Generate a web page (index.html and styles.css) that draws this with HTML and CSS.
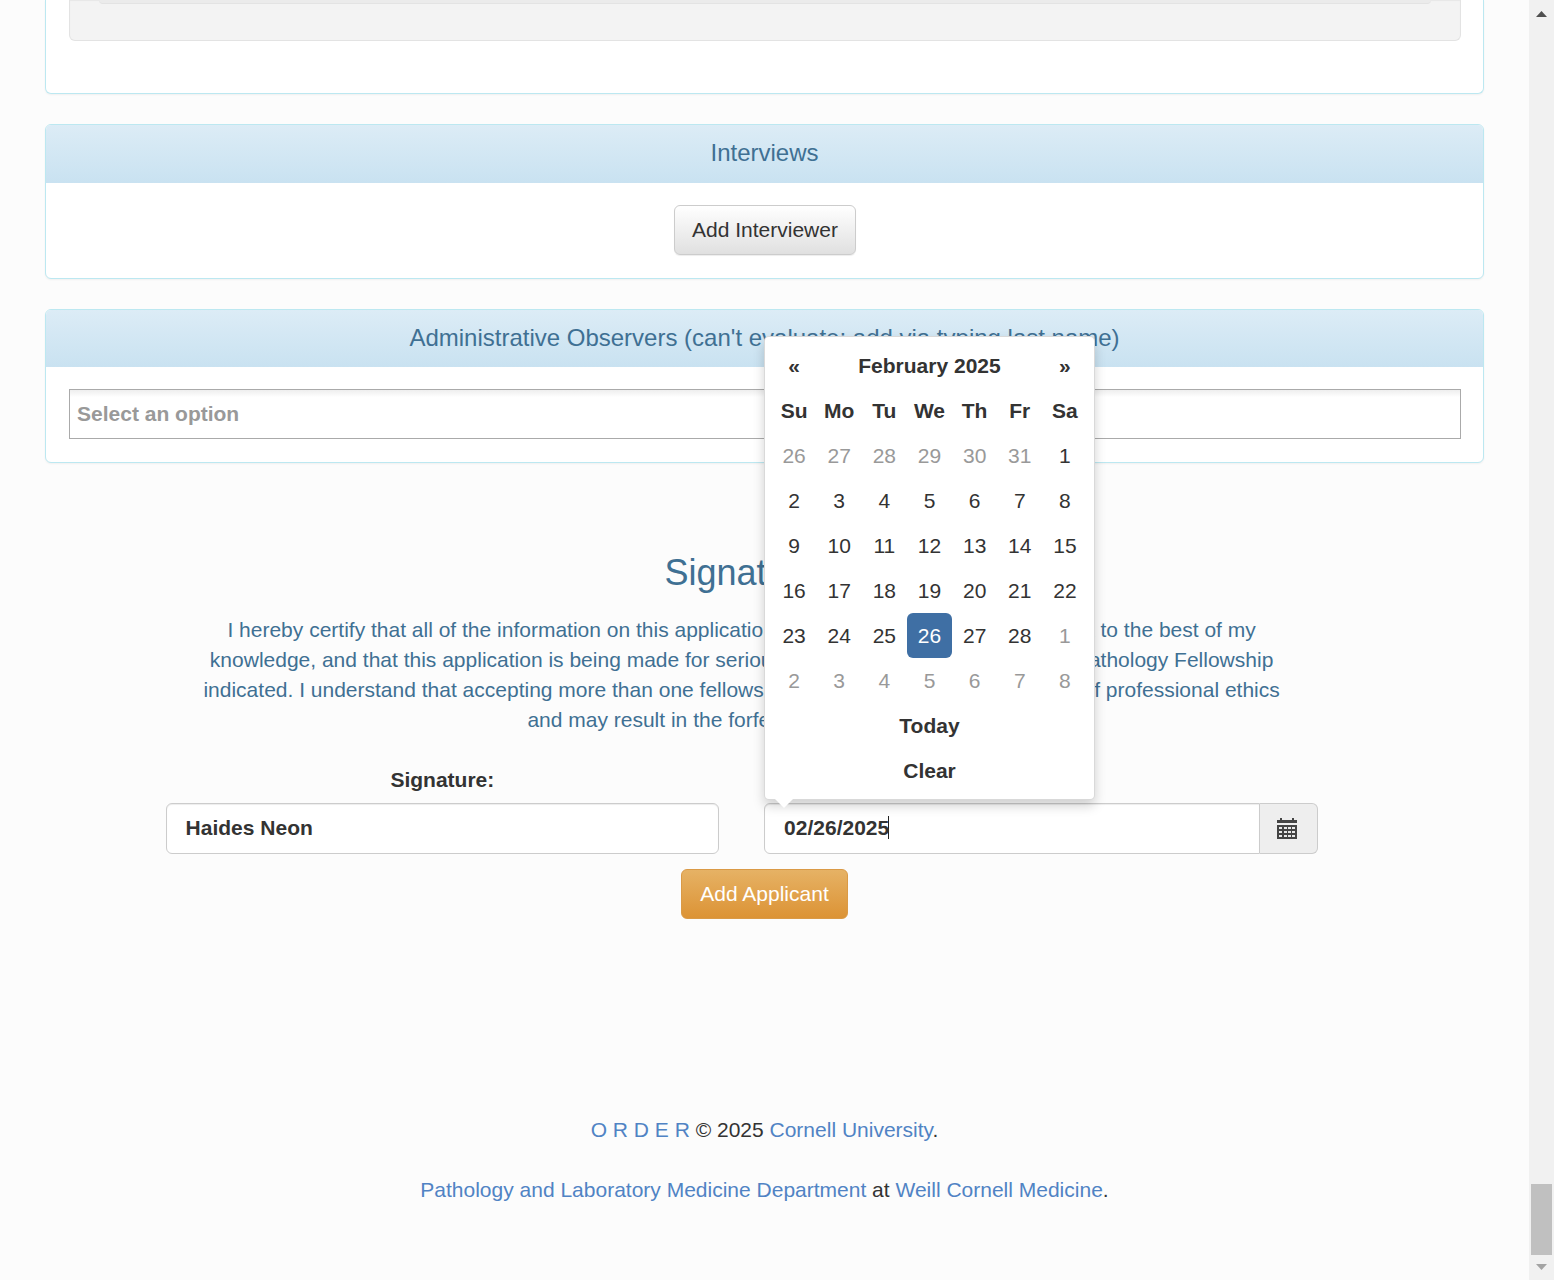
FILE: index.html
```html
<!DOCTYPE html>
<html lang="en">
<head>
    <meta charset="UTF-8">
    <title>Add Applicant</title>
    <link rel="stylesheet" href="styles.css">
</head>
<body>
    <div class="page">
        <div class="panel panel-top">
            <div class="well">
                <div class="well-inner"></div>
            </div>
        </div>

        <div class="panel">
            <div class="panel-heading">Interviews</div>
            <div class="panel-body center">
                <a class="btn btn-default">Add Interviewer</a>
            </div>
        </div>

        <div class="panel">
            <div class="panel-heading">Administrative Observers (can't evaluate; add via typing last name)</div>
            <div class="panel-body">
                <div class="select-box">Select an option</div>
            </div>
        </div>

        <div class="signature">
            <h2 class="signature-title">Signature</h2>
            <p class="certify">
                I hereby certify that all of the information on this application is fully complete, true, and correct to the best of my<br>
                knowledge, and that this application is being made for serious consideration of the Molecular Pathology Fellowship<br>
                indicated. I understand that accepting more than one fellowship position is a break of the code of professional ethics<br>
                and may result in the forfeiture of all positions.
            </p>
            <div class="sign-row">
                <div class="sign-col">
                    <label class="sign-label">Signature:</label>
                    <div class="form-control">Haides Neon</div>
                </div>
                <div class="sign-col">
                    <label class="sign-label">Date:</label>
                    <div class="input-group">
                        <div class="form-control group-input"><span class="caret-text">02/26/2025</span></div>
                        <span class="addon">
                            <svg width="20" height="21" viewBox="0 0 20 21">
                                <rect x="3" y="0" width="2" height="3" fill="#444"/>
                                <rect x="15" y="0" width="2" height="3" fill="#444"/>
                                <rect x="0" y="2" width="20" height="3" fill="#444"/>
                                <rect x="0" y="7" width="20" height="14" fill="#444"/>
                                <g fill="#e8e8e8">
                                    <rect x="2" y="9" width="3" height="2"/><rect x="7" y="9" width="3" height="2"/><rect x="11" y="9" width="3" height="2"/><rect x="15" y="9" width="3" height="2"/>
                                    <rect x="2" y="13" width="3" height="2"/><rect x="7" y="13" width="3" height="2"/><rect x="11" y="13" width="3" height="2"/><rect x="15" y="13" width="3" height="2"/>
                                    <rect x="2" y="17" width="3" height="2"/><rect x="7" y="17" width="3" height="2"/><rect x="11" y="17" width="3" height="2"/><rect x="15" y="17" width="3" height="2"/>
                                </g>
                            </svg>
                        </span>
                    </div>
                </div>
            </div>
        </div>
        <div class="center">
            <a class="btn btn-warning">Add Applicant</a>
        </div>

        <footer class="footer">
            <p><a>O R D E R</a> © 2025 <a>Cornell University</a>.</p>
            <p><a>Pathology and Laboratory Medicine Department</a> at <a>Weill Cornell Medicine</a>.</p>
        </footer>

        <div class="datepicker">
            <table>
                <tr class="head"><td>«</td><td colspan="5">February 2025</td><td>»</td></tr>
                <tr class="head"><td>Su</td><td>Mo</td><td>Tu</td><td>We</td><td>Th</td><td>Fr</td><td>Sa</td></tr>
                <tr><td class="old">26</td><td class="old">27</td><td class="old">28</td><td class="old">29</td><td class="old">30</td><td class="old">31</td><td>1</td></tr>
                <tr><td>2</td><td>3</td><td>4</td><td>5</td><td>6</td><td>7</td><td>8</td></tr>
                <tr><td>9</td><td>10</td><td>11</td><td>12</td><td>13</td><td>14</td><td>15</td></tr>
                <tr><td>16</td><td>17</td><td>18</td><td>19</td><td>20</td><td>21</td><td>22</td></tr>
                <tr><td>23</td><td>24</td><td>25</td><td class="active">26</td><td>27</td><td>28</td><td class="old">1</td></tr>
                <tr><td class="old">2</td><td class="old">3</td><td class="old">4</td><td class="old">5</td><td class="old">6</td><td class="old">7</td><td class="old">8</td></tr>
                <tr class="head"><td colspan="7">Today</td></tr>
                <tr class="head"><td colspan="7">Clear</td></tr>
            </table>
        </div>
    </div>

    <div class="scrollbar">
        <svg class="arrow" width="11" height="6" viewBox="0 0 11 6"><path d="M5.5 0L11 6H0z" fill="#505050"/></svg>
        <div class="thumb"></div>
        <svg class="arrow" width="11" height="6" viewBox="0 0 11 6"><path d="M0 0H11L5.5 6z" fill="#a3a3a3"/></svg>
    </div>
</body>
</html>
```

FILE: styles.css
```css
html, body {
    margin: 0;
    height: 1280px;
    overflow: hidden;
}
body {
    display: flex;
    background-color: #fcfcfc;
    font-family: "Liberation Sans", Arial, sans-serif;
    font-size: 21px;
    line-height: 30px;
    color: #333;
}
.page {
    position: relative;
    flex: 1;
    padding: 0 45px;
    min-width: 0;
}
.center {
    text-align: center;
}

/* panels */
.panel {
    background-color: #fff;
    border: 1px solid #bce8f1;
    border-radius: 6px;
    margin-bottom: 30px;
    box-shadow: 0 1px 2px rgba(0, 0, 0, .05);
}
.panel-top {
    height: 94px;
    box-sizing: border-box;
    padding: 0 22px 0 23px;
    border-top: 0;
    border-top-left-radius: 0;
    border-top-right-radius: 0;
}
.well {
    height: 41px;
    box-sizing: border-box;
    padding: 0 29px;
    background-color: #f3f3f3;
    border: 1px solid #e3e3e3;
    border-top: 0;
    border-radius: 0 0 6px 6px;
    box-shadow: inset 0 1px 1px rgba(0, 0, 0, .05);
}
.well-inner {
    height: 3px;
    background-color: #ebebeb;
    border-bottom: 1px solid #e3e3e3;
    border-radius: 0 0 4px 4px;
}
.panel-heading {
    height: 57.6px;
    line-height: 56px;
    text-align: center;
    font-size: 24px;
    color: #3f7093;
    background-image: linear-gradient(to bottom, #dcecf6, #c9e2f1);
    border-radius: 5px 5px 0 0;
}
.panel-body {
    padding: 22px 22px 23px 23px;
}
.select-box {
    height: 50px;
    box-sizing: border-box;
    padding: 0 7px;
    line-height: 48px;
    border: 1px solid #aaa;
    background-image: linear-gradient(to bottom, #eee 0, #fff 15%);
    font-weight: bold;
    color: #999;
}

/* buttons */
.btn {
    display: inline-block;
    box-sizing: border-box;
    height: 50px;
    padding: 0 18px;
    line-height: 48px;
    border: 1px solid #ccc;
    border-radius: 6px;
}
.btn-default {
    padding: 0 17.2px;
    color: #333;
    background-image: linear-gradient(to bottom, #fff, #e0e0e0);
    box-shadow: inset 0 1px 0 rgba(255, 255, 255, .15), 0 1px 1px rgba(0, 0, 0, .075);
}
.btn-warning {
    color: #fff;
    border-color: #da9a46;
    background-image: linear-gradient(to bottom, #e6b265, #dc9335);
}

/* signature */
.signature {
    width: 1152px;
    margin-left: 120.6px;
}
.signature-title {
    margin: 90px 0 0;
    font-size: 36px;
    line-height: 40px;
    font-weight: normal;
    text-align: center;
    color: #3f7093;
}
.certify {
    margin: 22px 0 0;
    text-align: center;
    white-space: nowrap;
    color: #3f7093;
}
.sign-row {
    display: flex;
    gap: 45px;
    margin-top: 30px;
    margin-bottom: 15px;
}
.sign-col {
    flex: 1;
    text-align: center;
}
.sign-label {
    display: block;
    font-weight: bold;
    margin-bottom: 8px;
}
.form-control {
    height: 51px;
    box-sizing: border-box;
    padding: 0 19px;
    line-height: 48px;
    text-align: left;
    font-weight: bold;
    background-color: #fff;
    border: 1px solid #ccc;
    border-radius: 6px;
    box-shadow: inset 0 1px 1px rgba(0, 0, 0, .075);
}
.input-group {
    display: flex;
}
.group-input {
    flex: 1;
    border-radius: 6px 0 0 6px;
}
.caret-text {
    box-shadow: inset -1px 0 0 #222;
}
.addon {
    display: flex;
    align-items: center;
    width: 58px;
    box-sizing: border-box;
    padding-left: 17px;
    background-color: #eee;
    border: 1px solid #ccc;
    border-left: 0;
    border-radius: 0 6px 6px 0;
}

/* footer */
.footer {
    margin-top: 196px;
    text-align: center;
    color: #333;
}
.footer p {
    margin: 0 0 30px;
}
.footer a {
    color: #5083c4;
}

/* date picker */
.datepicker {
    position: absolute;
    left: 764px;
    top: 336px;
    width: 331px;
    height: 464px;
    box-sizing: border-box;
    padding: 6.2px 6.5px;
    background-color: #fff;
    border: 1px solid rgba(0, 0, 0, .15);
    border-radius: 5px;
    box-shadow: 0 6px 12px rgba(0, 0, 0, .175);
}
.datepicker::after {
    content: "";
    position: absolute;
    left: 10px;
    bottom: -9px;
    border-left: 9px solid transparent;
    border-right: 9px solid transparent;
    border-top: 9px solid #fff;
}
.datepicker table {
    width: 100%;
    border-collapse: collapse;
    table-layout: fixed;
}
.datepicker td {
    height: 45px;
    padding: 0;
    text-align: center;
    color: #333;
}
.datepicker .head td {
    font-weight: bold;
}
.datepicker .old {
    color: #999;
}
.datepicker .active {
    color: #fff;
    background-color: #3f6fa4;
    border-radius: 6px;
}

/* scrollbar */
.scrollbar {
    width: 25px;
    height: 1280px;
    box-sizing: border-box;
    padding: 11px 2px 10px 2px;
    background-color: #f1f1f1;
    display: flex;
    flex-direction: column;
    align-items: center;
}
.arrow {
    flex: none;
}
.thumb {
    width: 21px;
    height: 71px;
    margin-top: auto;
    margin-bottom: 9px;
    background-color: #c0c0c0;
}
```
